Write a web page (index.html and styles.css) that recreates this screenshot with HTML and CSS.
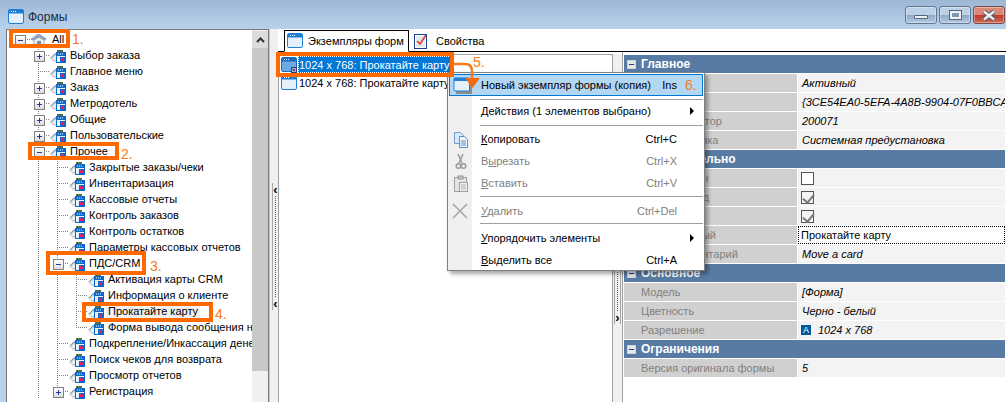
FILE: index.html
```html
<!DOCTYPE html>
<html lang="ru">
<head>
<meta charset="utf-8">
<title>Формы</title>
<link rel="stylesheet" href="styles.css">
</head>
<body>
<svg class="defs" width="0" height="0">
  <symbol id="form" viewBox="0 0 16 16">
    <path d="M0 11 5 6h2v8l-3 1z" fill="#c6d0d4"/>
    <path d="M1 11 5 7h2" stroke="#8a979e" fill="none"/>
    <path d="M2 12 5 9h2v3l-3 1z" fill="#eef1f2"/>
    <rect x="7" y="3" width="6" height="2" fill="#4f6f4f"/>
    <rect x="6" y="5" width="10" height="11" fill="#0a68c8"/>
    <rect x="7" y="9" width="8" height="6" fill="#e6f1fb"/>
    <rect x="8" y="6.500" width="1" height="1" fill="#fff"/><rect x="10" y="6.500" width="1" height="1" fill="#fff"/><rect x="12" y="6.500" width="1" height="1" fill="#fff"/>
    <rect x="10" y="10" width="5" height="5" fill="#0a68c8"/>
    <rect x="11" y="11" width="3" height="3" fill="#f01a62"/>
  </symbol>
  <symbol id="win" viewBox="0 0 16 16">
    <rect x=".5" y=".5" width="15" height="14" rx="1.5" fill="#e4f1fc" stroke="#1f7fd6"/>
    <rect x="1" y="1" width="14" height="3.5" fill="#1f7fd6"/>
    <rect x="3" y="2" width="1" height="1" fill="#fff"/><rect x="5" y="2" width="1" height="1" fill="#fff"/><rect x="7" y="2" width="1" height="1" fill="#fff"/>
  </symbol>
  <symbol id="winsel" viewBox="0 0 16 16">
    <rect x=".5" y=".5" width="15" height="14" rx="1.5" fill="#6ea9e2" stroke="#1a6cc0"/>
    <rect x="1" y="1" width="14" height="3.5" fill="#1a6cc0"/>
    <rect x="3" y="2" width="1" height="1" fill="#fff"/><rect x="5" y="2" width="1" height="1" fill="#fff"/><rect x="7" y="2" width="1" height="1" fill="#fff"/>
    <rect x="10.500" y="10.500" width="5" height="5" fill="#8fb4da" stroke="#2a3f7a"/>
    <rect x="12" y="12" width="2" height="2" fill="#b0208a"/>
  </symbol>
  <symbol id="home" viewBox="0 0 16 16" preserveAspectRatio="none">
    <path d="M3 9 8 5l5 4v6H3z" fill="#f4f3ea" stroke="#9aa3b3"/>
    <path d="M0 8 2 4 8 0l7 7-1 2-6-5-6 5z" fill="#93a6c6" stroke="#71829f" stroke-width=".7"/>
    <path d="M1 4 3 1h2L2 6z" fill="#e9edf4"/>
    <rect x="6" y="10" width="4" height="5" fill="#6f8fb8"/>
  </symbol>
</svg>

<div class="window">
  <header class="titlebar">
    <svg class="title-icon"><use href="#win"/></svg>
    <span class="title">Формы</span>
    <div class="controls">
      <span class="ctl"><i class="glyph-min"></i></span>
      <span class="ctl"><i class="glyph-max"></i></span>
      <span class="ctl close">
        <svg width="16" height="11" viewBox="0 0 16 11"><path d="M3 1.500 13 9.500M13 1.500 3 9.500" stroke="#4d5a66" stroke-width="4.500"/><path d="M3 1.500 13 9.500M13 1.500 3 9.500" stroke="#eef1f4" stroke-width="2.500"/></svg>
      </span>
    </div>
  </header>

  <main class="workspace">
    <section class="tree-pane">
      <div class="tree">
        <div class="row"><i class="c root m"></i><svg class="ic home"><use href="#home"/></svg><span>All</span></div>
        <div class="row"><i class="c"></i><i class="c tee p"></i><svg class="ic"><use href="#form"/></svg><span>Выбор заказа</span></div>
        <div class="row"><i class="c"></i><i class="c tee"></i><svg class="ic"><use href="#form"/></svg><span>Главное меню</span></div>
        <div class="row"><i class="c"></i><i class="c tee p"></i><svg class="ic"><use href="#form"/></svg><span>Заказ</span></div>
        <div class="row"><i class="c"></i><i class="c tee p"></i><svg class="ic"><use href="#form"/></svg><span>Метродотель</span></div>
        <div class="row"><i class="c"></i><i class="c tee p"></i><svg class="ic"><use href="#form"/></svg><span>Общие</span></div>
        <div class="row"><i class="c"></i><i class="c tee p"></i><svg class="ic"><use href="#form"/></svg><span>Пользовательские</span></div>
        <div class="row"><i class="c"></i><i class="c tee m"></i><svg class="ic"><use href="#form"/></svg><span>Прочее</span></div>
        <div class="row"><i class="c"></i><i class="c v"></i><i class="c tee"></i><svg class="ic"><use href="#form"/></svg><span>Закрытые заказы/чеки</span></div>
        <div class="row"><i class="c"></i><i class="c v"></i><i class="c tee"></i><svg class="ic"><use href="#form"/></svg><span>Инвентаризация</span></div>
        <div class="row"><i class="c"></i><i class="c v"></i><i class="c tee"></i><svg class="ic"><use href="#form"/></svg><span>Кассовые отчеты</span></div>
        <div class="row"><i class="c"></i><i class="c v"></i><i class="c tee"></i><svg class="ic"><use href="#form"/></svg><span>Контроль заказов</span></div>
        <div class="row"><i class="c"></i><i class="c v"></i><i class="c tee"></i><svg class="ic"><use href="#form"/></svg><span>Контроль остатков</span></div>
        <div class="row"><i class="c"></i><i class="c v"></i><i class="c tee"></i><svg class="ic"><use href="#form"/></svg><span>Параметры кассовых отчетов</span></div>
        <div class="row"><i class="c"></i><i class="c v"></i><i class="c tee m"></i><svg class="ic"><use href="#form"/></svg><span>ПДС/CRM</span></div>
        <div class="row"><i class="c"></i><i class="c v"></i><i class="c v"></i><i class="c tee"></i><svg class="ic"><use href="#form"/></svg><span>Активация карты CRM</span></div>
        <div class="row"><i class="c"></i><i class="c v"></i><i class="c v"></i><i class="c tee"></i><svg class="ic"><use href="#form"/></svg><span>Информация о клиенте</span></div>
        <div class="row"><i class="c"></i><i class="c v"></i><i class="c v"></i><i class="c tee"></i><svg class="ic"><use href="#form"/></svg><span class="picked">Прокатайте карту</span></div>
        <div class="row"><i class="c"></i><i class="c v"></i><i class="c v"></i><i class="c end"></i><svg class="ic"><use href="#form"/></svg><span>Форма вывода сообщения на экран</span></div>
        <div class="row"><i class="c"></i><i class="c v"></i><i class="c tee"></i><svg class="ic"><use href="#form"/></svg><span>Подкрепление/Инкассация денег</span></div>
        <div class="row"><i class="c"></i><i class="c v"></i><i class="c tee"></i><svg class="ic"><use href="#form"/></svg><span>Поиск чеков для возврата</span></div>
        <div class="row"><i class="c"></i><i class="c v"></i><i class="c tee"></i><svg class="ic"><use href="#form"/></svg><span>Просмотр отчетов</span></div>
        <div class="row"><i class="c"></i><i class="c v"></i><i class="c tee p"></i><svg class="ic"><use href="#form"/></svg><span>Регистрация</span></div>
      </div>
      <div class="scrollbar">
        <div class="scroll-up"><svg width="9" height="6" viewBox="0 0 9 6"><path d="M1 5 4.500 1.500 8 5" fill="none" stroke="#333" stroke-width="2"/></svg></div>
        <div class="scroll-thumb"></div>
      </div>
    </section>

    <div class="splitter first"><div class="grip"><b>‹</b><i></i><b>‹</b></div></div>

    <section class="content">
      <nav class="tabs">
        <div class="tab active"><svg class="ic-tab"><use href="#win"/></svg>Экземпляры форм</div>
        <div class="tab">
          <svg class="ic-tab" viewBox="0 0 16 16"><rect x=".5" y="1.500" width="12" height="14" fill="#fff" stroke="#1c3f94"/><rect x="2" y="3" width="9" height="11" fill="#dfe8f6"/><path d="M3 8 6 11 12 2" fill="none" stroke="#e53a20" stroke-width="1.600"/></svg>
          Свойства
        </div>
      </nav>
      <div class="panels">
        <div class="list">
          <div class="item">
            <svg class="ic-list"><use href="#winsel"/></svg><span class="sel">1024 x 768: Прокатайте карту</span>
          </div>
          <div class="item">
            <svg class="ic-list"><use href="#win"/></svg><span>1024 x 768: Прокатайте карту</span>
          </div>
        </div>
        <div class="splitter second"><div class="grip"><b>‹</b><i></i><b>›</b></div></div>
        <div class="props">
          <div class="group"><i class="minus"></i>Главное</div>
          <div class="prop"><span class="name">Состояние</span><span class="val it">Активный</span></div>
          <div class="prop"><span class="name">Код</span><span class="val it">{3CE54EA0-5EFA-4A8B-9904-07F0BBCAD1E2}</span></div>
          <div class="prop"><span class="name">Идентификатор</span><span class="val it">200071</span></div>
          <div class="prop"><span class="name">Предустановка</span><span class="val it">Системная предустановка</span></div>
          <div class="group"><i class="minus"></i>Дополнительно</div>
          <div class="prop"><span class="name">Опубликован</span><span class="val"><i class="check"></i></span></div>
          <div class="prop"><span class="name">Внешний вид</span><span class="val"><i class="check on"></i></span></div>
          <div class="prop"><span class="name">Видимость</span><span class="val"><i class="check on"></i></span></div>
          <div class="prop"><span class="name">Описательный</span><span class="val edit">Прокатайте карту</span></div>
          <div class="prop"><span class="name">Свой комментарий</span><span class="val it">Move a card</span></div>
          <div class="group"><i class="minus"></i>Основное</div>
          <div class="prop"><span class="name">Модель</span><span class="val it">[Форма]</span></div>
          <div class="prop"><span class="name">Цветность</span><span class="val it">Черно - белый</span></div>
          <div class="prop"><span class="name">Разрешение</span><span class="val it"><i class="res">A</i>1024 x 768</span></div>
          <div class="group"><i class="minus"></i>Ограничения</div>
          <div class="prop"><span class="name">Версия оригинала формы</span><span class="val it">5</span></div>
        </div>
      </div>
    </section>
  </main>
</div>

<div class="menu">
  <div class="mi hot"><svg class="mi-icon" width="20" height="17" viewBox="0 0 20 17"><rect x="3" y="3" width="16" height="14" fill="#8d8d8d"/><rect x="1" y="1" width="15.500" height="13" rx="1" fill="#e4f1fc" stroke="#1f7fd6"/><rect x="1" y="1" width="16" height="3" fill="#1f7fd6"/></svg><span class="lbl">Новый экземпляр формы (копия)</span><span class="key">Ins</span></div>
  <hr class="sep tight">
  <div class="mi"><span class="lbl">Действия (1 элементов выбрано)</span><i class="arrow"></i></div>
  <hr class="sep">
  <div class="mi"><svg class="mi-icon" width="16" height="17" viewBox="0 0 16 17"><path d="M1.500 1.500h6l3 3v8h-9z" fill="#d8e8f8" stroke="#6f9fd0"/><path d="M6.500 5.500h5l3 3v8h-8z" fill="#eef5fc" stroke="#5a8fc8"/><path d="M8 10h5M8 12h5M8 14h5" stroke="#5a8fc8"/></svg><span class="lbl"><u>К</u>опировать</span><span class="key">Ctrl+C</span></div>
  <div class="mi off"><svg class="mi-icon" width="16" height="17" viewBox="0 0 16 17"><path d="M5 1 9 10M10 1 6 10" stroke="#9a9a9a" stroke-width="1.500"/><circle cx="5.500" cy="13" r="2.300" fill="none" stroke="#9a9a9a" stroke-width="1.500"/><circle cx="10.500" cy="13" r="2.300" fill="none" stroke="#9a9a9a" stroke-width="1.500"/></svg><span class="lbl">В<u>ы</u>резать</span><span class="key">Ctrl+X</span></div>
  <div class="mi off"><svg class="mi-icon" width="16" height="17" viewBox="0 0 16 17"><rect x="1.500" y="2.500" width="12" height="14" fill="#e4e4e4" stroke="#a0a0a0"/><rect x="5" y="1" width="5" height="3" fill="#c0c0c0" stroke="#9a9a9a"/><rect x="6.500" y="7.500" width="8" height="9" fill="#f2f2f2" stroke="#a0a0a0"/><path d="M8 10h5M8 12h5M8 14h5" stroke="#b0b0b0"/></svg><span class="lbl"><u>В</u>ставить</span><span class="key">Ctrl+V</span></div>
  <hr class="sep short">
  <div class="mi off"><svg class="mi-icon x" width="16" height="16" viewBox="0 0 16 16"><path d="M1 1 15 15M15 1 1 15" stroke="#a8a8a8" stroke-width="1.700"/></svg><span class="lbl"><u>У</u>далить</span><span class="key">Ctrl+Del</span></div>
  <hr class="sep tight2">
  <div class="mi"><span class="lbl"><u>У</u>порядочить элементы</span><i class="arrow"></i></div>
  <div class="mi"><span class="lbl"><u>В</u>ыделить все</span><span class="key">Ctrl+A</span></div>
</div>

<div class="mark m1"></div><span class="step s1">1.</span>
<div class="mark m2"></div><span class="step s2">2.</span>
<div class="mark m3"></div><span class="step s3">3.</span>
<div class="mark m4"></div><span class="step s4">4.</span>
<div class="mark m5"></div><span class="step s5">5.</span>
<span class="step s6">6.</span>
<svg class="flow" width="32" height="30" viewBox="0 0 32 30"><path d="M0 2H11Q18 2 18 9V18" fill="none" stroke="#f47a20" stroke-width="2.500"/><path d="M11 16H26L18.500 26z" fill="#f26a12"/></svg>
</body>
</html>
```

FILE: styles.css
```css
* { box-sizing: border-box; }
html, body { margin: 0; height: 402px; overflow: hidden; }
body {
  position: relative;
  font: 11px/16px "Liberation Sans", Arial, sans-serif;
  color: #000;
  background: #b9d1ea;
}
.defs { position: absolute; }
i { display: block; font-style: normal; }

.window { display: flex; flex-direction: column; height: 402px; }

/* title bar */
.titlebar {
  height: 29px;
  flex: none;
  display: flex;
  align-items: center;
  padding: 4px 1px 0 8px;
  background: linear-gradient(#9eb7d5, #b9d2ec);
}
.title-icon { width: 16px; height: 16px; margin-right: 4px; }
.title { font-size: 12px; color: #1b2a44; }
.controls { margin: -3px 0 0 auto; display: flex; gap: 2px; }
.ctl {
  width: 32px;
  height: 18px;
  display: flex;
  align-items: center;
  justify-content: center;
  border: 1px solid #5f7793;
  border-radius: 3px;
  background: linear-gradient(#bcd0e6 0 48%, #8fa9c6 52%, #b5cbe3);
  box-shadow: inset 0 0 0 1px rgba(255,255,255,.35);
}
.ctl.close { background: linear-gradient(#d98878 0 48%, #bd3a28 52%, #cf6a58); border-color: #7a4a48; }
.glyph-min { width: 14px; height: 4px; margin-top: 3px; background: #eef2f6; border: 1px solid #55667c; border-radius: 1px; }
.glyph-max { width: 11px; height: 8px; border: 2px solid #eef2f6; outline: 1px solid #55667c; background: #7f97b4; }

/* layout */
.workspace { flex: 1; min-height: 0; display: flex; padding-left: 6px; }

/* tree */
.tree-pane { width: 263px; flex: none; display: flex; background: #fff; border: 1px solid #7a7a7a; border-width: 1px 1px 0; overflow: hidden; }
.tree { flex: 1; min-width: 0; overflow: hidden; padding: 1px 0 0 3px; }
.row { height: 16px; display: flex; align-items: center; white-space: nowrap; }
.row span { margin-left: 2px; padding: 0 2px; }
.picked { background: #f0f0f0; }
.ic { width: 16px; height: 16px; flex: none; }
.ic.home { height: 11px; margin-right: 1px; }

.c {
  --dv: repeating-linear-gradient(#808080 0 1px, #0000 1px 2px);
  --dh: repeating-linear-gradient(90deg, #808080 0 1px, #0000 1px 2px);
  position: relative;
  width: 19px;
  height: 16px;
  flex: none;
}
.v { background: var(--dv) 9px 0 / 1px 100% no-repeat; }
.tee, .end, .root { width: 21px; }
.tee { background: var(--dv) 9px 0 / 1px 100% no-repeat, var(--dh) 9px 8px / 12px 1px no-repeat; }
.end { background: var(--dv) 9px 0 / 1px 9px no-repeat, var(--dh) 9px 8px / 12px 1px no-repeat; }
.root { background: var(--dv) 9px 8px / 1px 8px no-repeat, var(--dh) 9px 8px / 12px 1px no-repeat; }

/* expander box */
.p::after, .m::after {
  content: "";
  position: absolute;
  left: 5px;
  top: 4px;
  width: 9px;
  height: 9px;
  border: 1px solid #808080;
  background: linear-gradient(#1c3f94, #1c3f94) center / 5px 1px no-repeat, linear-gradient(#fff, #dcdcdc);
}
.p::after {
  background: linear-gradient(#1c3f94, #1c3f94) center / 1px 5px no-repeat, linear-gradient(#1c3f94, #1c3f94) center / 5px 1px no-repeat, linear-gradient(#fff, #dcdcdc);
}

.scrollbar { width: 16px; flex: none; display: flex; flex-direction: column; background: #f0f0f0; }
.scroll-up { height: 17px; margin-top: 1px; display: flex; align-items: center; justify-content: center; background: #dcdcdc; }
.scroll-thumb { height: 323px; background: #c8c8c8; }

/* splitters */
.splitter { flex: none; background: #f0f0f0; }
.splitter.first { width: 9px; padding: 154px 0 0 2px; border-left: 1px solid #c8c8c8; }
.splitter.second { width: 9px; padding: 143px 0 0 1px; margin-top: 2px; }
.grip {
  width: 7px;
  height: 127px;
  display: flex;
  flex-direction: column;
  align-items: center;
  justify-content: space-between;
  background: #f0f0f0;
  border: 1px solid #a8a8a8;
  border-width: 0 1px;
}
.grip b { font: bold 13px/13px "Liberation Sans", sans-serif; }
.grip i { flex: 1; width: 0; border-left: 1px dotted #0078d7; }

/* content area */
.content { flex: 1; min-width: 0; display: flex; flex-direction: column; background: #fff; }
.tabs { height: 23px; flex: none; display: flex; align-items: flex-end; padding-left: 6px; gap: 5px; border-bottom: 1px solid #000; }
.tab { height: 21px; display: flex; align-items: center; gap: 6px; white-space: nowrap; padding-right: 2px; }
.tab.active { width: 125px; padding-left: 2px; gap: 5px; border: 1px solid #000; border-bottom: 1px solid #fff; margin-bottom: -1px; height: 22px; }
.ic-tab { width: 16px; height: 16px; flex: none; }

.panels { flex: 1; min-height: 0; display: flex; }
.list { width: 335px; flex: none; margin-top: 2px; padding: 1px 0 0 2px; border: 1px solid #a0a0a0; border-bottom: 0; overflow: hidden; }
.item { height: 17px; display: flex; align-items: center; white-space: nowrap; }
.item + .item { margin-top: 1px; }
.ic-list { width: 16px; height: 16px; flex: none; margin-right: 1px; }
.item span { width: 153px; overflow: hidden; padding: 1px 1px 0; line-height: 16px; }
.sel { background: #0078d7; color: #fff; outline: 1px dotted #fff; outline-offset: -1px; }

/* property grid */
.props { flex: 1; min-width: 0; padding: 3px 1px 0 1px; border-left: 1px solid #a0a0a0; margin-left: 0; }
.group {
  height: 18px;
  margin-bottom: 1px;
  display: flex;
  align-items: center;
  color: #fff;
  font: bold 12px/18px "Liberation Sans", sans-serif;
  background: #587ba4;
  padding-left: 3px;
  gap: 5px;
}
.minus { width: 9px; height: 9px; background: linear-gradient(#1c3f94, #1c3f94) center / 5px 1px no-repeat, #e8e8e8; border: 1px solid #c8d4e2; }
.prop { height: 18px; margin-bottom: 1px; display: flex; }
.name { width: 173px; flex: none; padding-left: 17px; background: #d0d0d0; color: #808080; line-height: 18px; white-space: nowrap; overflow: hidden; }
.val { flex: 1; min-width: 0; margin-left: 1px; padding-left: 4px; background: #f3f3f3; line-height: 18px; white-space: nowrap; overflow: hidden; display: flex; align-items: center; }
.it { font-style: italic; }
.edit { padding-left: 3px; background: #fff; outline: 1px dotted #000; outline-offset: -1px; }
.check { width: 13px; height: 13px; margin-left: -1px; border: 1px solid #555; background: #fff; }
.check.on { background: #f3f3f3; position: relative; }
.check.on::after {
  content: "";
  position: absolute;
  left: 3px;
  top: 0;
  width: 5px;
  height: 9px;
  border: solid #777;
  border-width: 0 2px 2px 0;
  transform: rotate(40deg);
}
.res { width: 10px; height: 10px; margin: 0 7px 0 -1px; background: #005a9e; color: #fff; font: 9px/10px "Liberation Sans", sans-serif; text-align: center; }

/* context menu */
.menu {
  position: absolute;
  left: 447px;
  top: 72px;
  width: 258px;
  height: 199px;
  padding: 1px;
  border: 1px solid #808080;
  background: linear-gradient(90deg, #f0f0f0 24px, #fff 24px);
  box-shadow: 3px 3px 4px rgba(0,0,0,.35);
}
.mi { position: relative; height: 22px; display: flex; align-items: center; padding: 0 26px 0 32px; white-space: nowrap; }
.mi-icon { position: absolute; left: 4px; top: 3px; }
.mi-icon.x { left: 3px; }
.mi .key { margin-left: auto; }
.mi .arrow { margin-left: auto; margin-right: -17px; width: 0; height: 0; border-left: 4px solid #000; border-top: 4px solid transparent; border-bottom: 4px solid transparent; }
.hot { background: #b3d7f3; outline: 1px solid #0078d7; outline-offset: -1px; }
.off { color: #808080; }
.sep { height: 1px; margin: 3px 0 2px 31px; border: 0; background: #a0a0a0; }
.sep.tight { margin: 3px 0 0 31px; }
.sep.short { margin: 2px 0 3px 31px; }
.sep.tight2 { margin: 1px 0 3px 31px; }

/* instruction overlay */
.mark { position: absolute; border: 4px solid #ff6a00; }
.m1 { left: 9px; top: 29px; width: 61px; height: 19px; }
.m2 { left: 28px; top: 142px; width: 91px; height: 18px; }
.m3 { left: 46px; top: 251px; width: 100px; height: 24px; }
.m4 { left: 82px; top: 302px; width: 131px; height: 20px; }
.m5 { left: 276px; top: 52px; width: 178px; height: 25px; }
.step { position: absolute; font: 14px/16px "Liberation Sans", sans-serif; color: #f47a20; }
.s1 { left: 72px; top: 31px; }
.s2 { left: 121px; top: 146px; }
.s3 { left: 150px; top: 258px; }
.s4 { left: 215px; top: 306px; }
.s5 { left: 473px; top: 54px; }
.s6 { left: 685px; top: 77px; }
.flow { position: absolute; left: 454px; top: 62px; }
```
